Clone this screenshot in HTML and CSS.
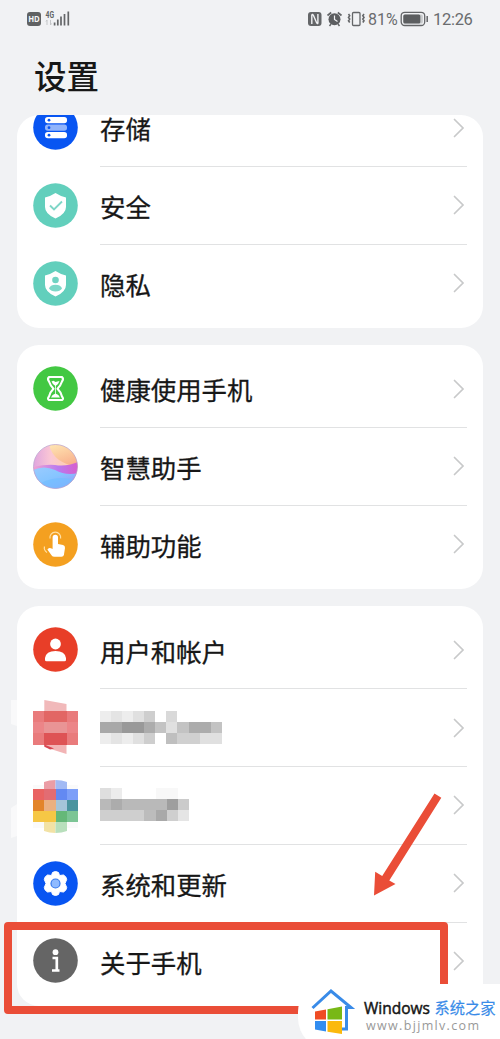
FILE: index.html
```html
<!DOCTYPE html>
<html lang="zh-CN">
<head>
<meta charset="utf-8">
<title>设置</title>
<link rel="stylesheet" href="styles.css">
</head>
<body>
<div class="screen">
  <header class="status">
    <svg class="status-left" viewBox="0 0 50 24">
      <rect x="1" y="6" width="14" height="14" rx="3" fill="#606263"/>
      <text class="hd" x="2.2" y="16.200" textLength="11.6" lengthAdjust="spacingAndGlyphs">HD</text>
      <text class="net" x="19.5" y="12" textLength="8.5" lengthAdjust="spacingAndGlyphs">4G</text>
      <path d="M21 14v5M20 15.500l1-1.500M24.500 14v5l1-1.500" stroke="#c4c6c8" fill="none"/>
      <path d="M28.600 17v3M31.800 14v6M35 11v9M38.500 8.500v11.500M42.300 6v14" transform="translate(0 -.4)" stroke="#646668" stroke-width="1.700"/>
    </svg>
    <div class="status-right">
      <svg class="status-icons" viewBox="0 0 60 24">
        <rect x="0" y="6" width="13.500" height="14" rx="3" fill="#646668"/>
        <path d="M3.800 18V9Q4.500 7.700 5.500 9.500L8.500 16.500Q9.700 18.300 9.900 17V8" fill="none" stroke="#f1f2f4" stroke-width="1.400"/>
        <circle cx="26.500" cy="13.300" r="6" fill="#5c5e60"/>
        <path d="M19.500 9.500l3.700-3M33.500 9.500l-3.700-3" stroke="#646668" stroke-width="1.700"/>
        <path d="M23 18l-1.500 2M30 18l1.500 2" stroke="#646668" stroke-width="1.500"/>
        <path d="M26.500 9.500v4l3 2" fill="none" stroke="#f1f2f4" stroke-width="1.200"/>
        <rect x="44.500" y="6.500" width="7.500" height="13" rx="1" fill="none" stroke="#646668" stroke-width="1.300"/>
        <path d="M40.500 8l1.200 1.700-1.200 1.700 1.200 1.700-1.200 1.700 1.200 1.700M56 8l-1.200 1.700 1.200 1.700-1.200 1.700 1.200 1.700-1.200 1.700" fill="none" stroke="#646668" stroke-width="1.600"/>
      </svg>
      <span class="percent">81%</span>
      <svg class="battery" viewBox="0 0 30 24">
        <rect x="1.200" y="6.300" width="23.500" height="13.200" rx="3.500" fill="none" stroke="#646668" stroke-width="1.300"/>
        <rect x="3.300" y="8.500" width="19.500" height="9" rx="1.500" fill="#c8cacc"/>
        <rect x="3.300" y="8.500" width="17" height="9" rx="1.500" fill="#5c5e60"/>
        <path d="M27.200 10v6" stroke="#646668" stroke-width="1.500"/>
      </svg>
      <span class="clock">12:26</span>
    </div>
  </header>
  <h1 class="title">设置</h1>
  <main class="cards">
    <section class="card card-scrolled">
      <div class="row">
        <svg class="icon" viewBox="0 0 45 45"><circle cx="22.500" cy="22.500" r="22.300" fill="#0855f2"/>
          <rect x="12" y="12" width="22" height="6.300" rx="2.800" fill="#fff"/><rect x="12" y="19.500" width="22" height="6.300" rx="2.800" fill="#91b4fb"/><rect x="12" y="27" width="22" height="6.300" rx="2.800" fill="#fff"/>
          <g fill="#0855f2"><circle cx="16" cy="15.200" r="1.400"/><circle cx="16" cy="22.700" r="1.400"/><circle cx="16" cy="30.200" r="1.400"/></g></svg>
        <div class="body"><span class="label">存储</span><svg class="chevron" viewBox="0 0 12 20"><path d="M1.500 1.500L10 10l-8.500 8.500"/></svg></div>
      </div>
      <div class="row">
        <svg class="icon" viewBox="0 0 45 45"><circle cx="22.500" cy="22.500" r="22.300" fill="#62cfbc"/>
          <path d="M22.500 10Q27 13 33 14.500V24Q33 31 22.500 35.500Q12 31 12 24V14.500Q18 13 22.500 10Z" fill="#fff"/>
          <path d="M17 22.500l4 4 8-8" fill="none" stroke="#7fd6c7" stroke-width="1.900"/></svg>
        <div class="body"><span class="label">安全</span><svg class="chevron" viewBox="0 0 12 20"><path d="M1.500 1.500L10 10l-8.500 8.500"/></svg></div>
      </div>
      <div class="row">
        <svg class="icon" viewBox="0 0 45 45"><circle cx="22.500" cy="22.500" r="22.300" fill="#62cfbc"/>
          <path d="M22.500 10Q27 13 33 14.500V24Q33 31 22.500 35.500Q12 31 12 24V14.500Q18 13 22.500 10Z" fill="#fff"/>
          <circle cx="22.500" cy="19" r="3.300" fill="#70d3c2"/><path d="M16 27.500Q17 23.700 22.500 23.700T29 27.500Q27 30.500 22.500 30.500T16 27.500Z" fill="#7dd8c8"/></svg>
        <div class="body"><span class="label">隐私</span><svg class="chevron" viewBox="0 0 12 20"><path d="M1.500 1.500L10 10l-8.500 8.500"/></svg></div>
      </div>
    </section>

    <section class="card">
      <div class="row">
        <svg class="icon" viewBox="0 0 45 45"><circle cx="22.500" cy="22.500" r="22.300" fill="#43c843"/>
          <path d="M16 11H29Q31 13 29 15.500Q27.500 20 24.500 22.700Q28 26 29 30.500Q31 33 29 34H16Q14 33 16 30.500Q17 26 20.500 22.700Q17.500 20 16 15.500Q14 13 16 11Z" fill="none" stroke="#fff" stroke-width="2.100" stroke-linejoin="round"/>
          <path d="M18.500 15.500l2-.7 2 1.200 4-1Q25.500 18.500 22.500 20Q19.500 18.500 18.500 15.500ZM18 31.500Q19 28.500 22.500 27.500Q26 28.500 27 31.500Z" fill="#fff"/><path d="M22.500 19v9" stroke="#fff" stroke-width=".8"/></svg>
        <div class="body"><span class="label">健康使用手机</span><svg class="chevron" viewBox="0 0 12 20"><path d="M1.500 1.500L10 10l-8.500 8.500"/></svg></div>
      </div>
      <div class="row">
        <svg class="icon" viewBox="0 0 45 45">
          <defs>
            <clipPath id="orb"><circle cx="22.500" cy="22.500" r="22"/></clipPath>
            <linearGradient id="sky"><stop offset="0" stop-color="#dfa5df"/><stop offset=".4" stop-color="#fbc8d4"/><stop offset="1" stop-color="#ffd49b"/></linearGradient>
            <linearGradient id="warm" x1="0" y1="0" x2=".4" y2="1"><stop offset="0" stop-color="#ffe8b4"/><stop offset="1" stop-color="#f8b08c"/></linearGradient>
            <linearGradient id="violet"><stop offset="0" stop-color="#f2a3d0"/><stop offset=".55" stop-color="#b97af0"/><stop offset="1" stop-color="#d85dcc"/></linearGradient>
            <linearGradient id="sea" x1="0" y1="0" x2=".8" y2="1"><stop offset="0" stop-color="#9acbff"/><stop offset=".5" stop-color="#86c5ff"/><stop offset="1" stop-color="#9a94fa"/></linearGradient>
          </defs>
          <g clip-path="url(#orb)"><rect width="45" height="45" fill="url(#sky)"/>
            <path d="M16 0H45V24Q32 20 26 16Q18 10 16 0Z" fill="url(#warm)"/>
            <path d="M0 23Q14 20 22 21Q33 23 45 18V36H0Z" fill="url(#violet)"/>
            <path d="M0 26Q11 21 22 26Q33 32 45 29V45H0Z" fill="url(#sea)"/>
            <path d="M8 39Q24 31 43 36L36 45H12Z" fill="#70bfff" opacity=".7"/></g>
          <circle cx="22.500" cy="22.500" r="22" fill="none" stroke="#b7a4cf" stroke-width=".7"/></svg>
        <div class="body"><span class="label">智慧助手</span><svg class="chevron" viewBox="0 0 12 20"><path d="M1.500 1.500L10 10l-8.500 8.500"/></svg></div>
      </div>
      <div class="row">
        <svg class="icon" viewBox="0 0 45 45"><circle cx="22.500" cy="22.500" r="22.300" fill="#f4a020"/>
          <path d="M19.600 15.500a2.700 2.700 0 0 1 5.400 0V22L30 23Q32.200 23.600 32 26L30.900 33Q30.500 34.800 28.500 34.800H21.500Q19.500 34.800 18.500 33.200L14.400 27.600Q15.500 25.300 18 26.300L19.600 27Z" fill="#fff"/>
          <path d="M17 16.500a5.400 5.400 0 1 1 10.600 0M11.500 24.500Q10.500 28 14 30.500" fill="none" stroke="#ffe0a4" stroke-width="1.200"/></svg>
        <div class="body"><span class="label">辅助功能</span><svg class="chevron" viewBox="0 0 12 20"><path d="M1.500 1.500L10 10l-8.500 8.500"/></svg></div>
      </div>
    </section>

    <section class="card">
      <div class="row">
        <svg class="icon" viewBox="0 0 45 45"><circle cx="22.500" cy="22.500" r="22.300" fill="#e83e28"/>
          <circle cx="22.500" cy="17" r="5.400" fill="#fff"/><path d="M12 33V31Q13 23.900 22.500 23.900T33 31V33Q33 34.300 31.500 34.300H13.500Q12 34.300 12 33Z" fill="#fff"/></svg>
        <div class="body"><span class="label">用户和帐户</span><svg class="chevron" viewBox="0 0 12 20"><path d="M1.500 1.500L10 10l-8.500 8.500"/></svg></div>
      </div>
      <div class="row">
        <svg class="mosaic" viewBox="0 0 45 56">
          <path d="M11.300 0L33.500 4v8H11.300Z" fill="#f1b9ba"/><path d="M11.300 44h22.200v10L11.300 47Z" fill="#f2b4b5"/>
          <path d="M11.300 44.500L21 48.500l-4 1-5.700-3Z" fill="#d84652"/>
          <g shape-rendering="crispEdges"><path d="M0 11h45v33.500H0Z" fill="#e97b7c"/><path d="M11 11h22.500v11H11Z" fill="#e26664"/><path d="M0 22h11v11H0ZM33.500 22H45v11H33.500Z" fill="#ec8588"/><path d="M11 22h22.500v11H11Z" fill="#e99495"/><path d="M11 33h22.500v11.500H11Z" fill="#de5355"/></g>
        </svg>
        <div class="body"><svg class="blurred" viewBox="0 0 123 56" shape-rendering="crispEdges">
          <path d="M0 11h11v33H0ZM22 11h11v33H22ZM83 33h11v11H83Z" fill="#ededed"/><path d="M11 11h11v33H11Z" fill="#e4e4e4"/><path d="M33 11h11v33H33Z" fill="#e0e0e0"/><path d="M44 11h11v33H44Z" fill="#cecece"/>
          <path d="M0 22h22v11H0Z" fill="#a8a8a8"/><path d="M22 22h22v11H22Z" fill="#999"/><path d="M44 22h11v11H44ZM89 22h22v11H89Z" fill="#acacac"/><path d="M55 22h11v11H55ZM78 22h11v11H78ZM111 22h11v11h-11Z" fill="#c3c3c3"/>
          <path d="M66 11h11v11H66Z" fill="#d9d9d9"/><path d="M66 22h11v11H66ZM100 33h22v11h-22Z" fill="#e0e0e0"/><path d="M66 33h11v11H66Z" fill="#bfbfbf"/><path d="M77 33h23v11H77Z" fill="#d0d0d0"/><path d="M77 22h1v11h-1Z" fill="#c3c3c3"/>
        </svg><svg class="chevron" viewBox="0 0 12 20"><path d="M1.500 1.500L10 10l-8.500 8.500"/></svg></div>
      </div>
      <div class="row">
        <svg class="mosaic" viewBox="0 -1 45 56">
          <path d="M11 10V3Q16 1 22.500 1V10Z" fill="#eb9da5"/><path d="M22.500 10V1Q29 1 34 3V10Z" fill="#a2baf4"/>
          <g shape-rendering="crispEdges"><path d="M0 10h11v11H0Z" fill="#e96362"/><path d="M11 10h11.500v11H11Z" fill="#e26c73"/><path d="M22.500 10H34v11H22.500Z" fill="#6389f2"/><path d="M34 10h11v11H34Z" fill="#7d9ff8"/>
          <path d="M0 21h11v11H0Z" fill="#e38429"/><path d="M11 21h11.500v11H11Z" fill="#ebb080"/><path d="M22.500 21H34v11H22.500Z" fill="#a5c5d9"/><path d="M34 21h11v11H34Z" fill="#4a949f"/>
          <path d="M0 32h22.500v11H0Z" fill="#f6c745"/><path d="M22.500 32H34v11H22.500Z" fill="#65b878"/><path d="M34 32h11v11H34Z" fill="#7cc595"/></g>
          <path d="M11 43h11.500v11Q16 54 11 52Z" fill="#f2e2a5"/><path d="M22.500 43H34v9Q29 54 22.500 54Z" fill="#b8dfbc"/>
          <path d="M0 6h11v4H0ZM34 6h11v4H34ZM0 43h11v6H0ZM34 43h11v6H34Z" fill="#fafafa"/>
        </svg>
        <div class="body"><svg class="blurred" viewBox="0 -1 123 56" shape-rendering="crispEdges">
          <path d="M0 10h11v11H0Z" fill="#dedede"/><path d="M11 10h11v11H11Z" fill="#ececec"/><path d="M56 10h22v11H56Z" fill="#f8f8f8"/>
          <path d="M0 21h89v11H0Z" fill="#b9b9b9"/><path d="M11 21h11v11H11Z" fill="#acacac"/><path d="M67 21h11v11H67Z" fill="#9e9e9e"/><path d="M78 21h11v11H78Z" fill="#cbcbcb"/>
          <path d="M0 32h89v11H0Z" fill="#cfcfcf"/><path d="M44 32h12v11H44Z" fill="#bcbcbc"/><path d="M56 32h11v11H56Z" fill="#a9a9a9"/><path d="M78 32h11v11H78Z" fill="#e5e5e5"/>
        </svg><svg class="chevron" viewBox="0 0 12 20"><path d="M1.500 1.500L10 10l-8.500 8.500"/></svg></div>
      </div>
      <div class="row">
        <svg class="icon" viewBox="0 0 45 45"><circle cx="22.500" cy="22.500" r="22.300" fill="#0855f2"/>
          <path d="M19.500 11.500Q22.500 9.500 25.500 11.500L26.500 14.500L30.500 14Q33.500 15.500 33.700 18.500L32 22.500L33.700 26.500Q33.500 29.500 30.500 31L26.500 30.500L25.500 33.500Q22.500 35.500 19.500 33.500L18.500 30.500L14.500 31Q11.500 29.500 11.300 26.500L13 22.500L11.300 18.500Q11.500 15.500 14.500 14L18.500 14.500Z" fill="#fff" stroke="#fff" stroke-linejoin="round"/>
          <circle cx="22.500" cy="22.500" r="4.500" fill="#8fbaff" stroke="#3478ed" stroke-width="1.200"/></svg>
        <div class="body"><span class="label">系统和更新</span><svg class="chevron" viewBox="0 0 12 20"><path d="M1.500 1.500L10 10l-8.500 8.500"/></svg></div>
      </div>
      <div class="row">
        <svg class="icon" viewBox="0 0 45 45"><circle cx="22.500" cy="22.500" r="22.300" fill="#656565"/>
          <circle cx="22.500" cy="14.200" r="2.900" fill="#fff"/><path d="M19.500 20h4.300v12.500M19 32.500h7.500" fill="none" stroke="#fff" stroke-width="2.700"/></svg>
        <div class="body"><span class="label">关于手机</span><svg class="chevron" viewBox="0 0 12 20"><path d="M1.500 1.500L10 10l-8.500 8.500"/></svg></div>
      </div>
    </section>
  </main>

  <svg class="smudges" viewBox="0 0 6 140"><path d="M0 0L6-2V26L0 24ZM0 108L6 104V136L0 138Z" fill="#f9f9fa"/></svg>
  <div class="highlight"></div>
  <svg class="arrow" viewBox="0 0 75 106"><path d="M64.500 3.500L71.300 7.700L19.300 90.500L25.500 94L4 105.500L5.200 81.700L12.200 86Z" fill="#ea4d37"/></svg>
  <footer class="watermark">
    <svg class="logo" viewBox="0 0 46 46">
      <path d="M3.500 21L22 4L42 20.500H37.500V42H29" fill="none" stroke="#398be8" stroke-width="3"/>
      <path d="M6 24.500L17 22.500V32.500H6Z" fill="#ef4c24"/><path d="M18.500 22.200L33 19.500V32.500H18.500Z" fill="#78b816"/><path d="M6 34H17V44.500L6 42.500Z" fill="#328df0"/><path d="M18.500 34H33V47L18.500 44.700Z" fill="#fbb90d"/>
    </svg>
    <svg class="wordmark" viewBox="0 0 137 46">
      <text class="brand" x="2" y="27" textLength="66" lengthAdjust="spacingAndGlyphs">Windows</text>
      <text class="brand-cn" x="72.500" y="27" textLength="61" lengthAdjust="spacingAndGlyphs">系统之家</text>
      <text class="url" x="4" y="42.500" textLength="113">www.bjjmlv.com</text>
    </svg>
  </footer>
</div>
</body>
</html>
```

FILE: styles.css
```css
* { box-sizing: border-box; }
body {
  margin: 0;
  background: #f1f2f4;
  color: #171717;
  font-family: "Noto Sans CJK SC", sans-serif;
}
svg { display: block; flex: none; }
.screen {
  position: relative;
  width: 500px;
  height: 1039px;
  overflow: hidden;
}
.status {
  display: flex;
  justify-content: space-between;
  height: 38px;
  padding: 6px 26px 0 26px;
}
.status-left { width: 50px; height: 24px; }
.status-right {
  display: flex;
  align-items: center;
  height: 24px;
  color: #6a6c6e;
  font: 16.5px/24px Roboto, sans-serif;
}
.status-icons { width: 60px; height: 24px; }
.percent { width: 32px; padding-top: 3px; font-size: 16px; }
.battery { width: 30px; height: 24px; }
.clock { width: 41px; margin-left: 3px; padding-top: 3px; letter-spacing: -.3px; white-space: nowrap; }
.hd { font: bold 9px "Open Sans", sans-serif; fill: #f5f6f7; }
.net { font: bold 8.500px Roboto, sans-serif; fill: #606264; }
.title {
  height: 77px;
  margin: 0;
  padding: 13px 0 0 34px;
  font-size: 32.5px;
  line-height: 48px;
  font-weight: 500;
}
.cards {
  display: flex;
  flex-direction: column;
  gap: 16.5px;
  padding: 0 17px;
}
.card {
  display: flex;
  flex-direction: column;
  justify-content: flex-end;
  padding: 5.8px 16px 5.4px;
  border-radius: 22px;
  background: #fff;
  overflow: hidden;
}
.card-scrolled { height: 213px; }
.row {
  display: flex;
  align-items: center;
  flex: none;
  height: 77.8px;
}
.icon { width: 45px; height: 45px; margin-bottom: 1px; }
.mosaic { width: 45px; height: 56px; }
.blurred { width: 123px; height: 56px; }
.body {
  display: flex;
  align-items: center;
  justify-content: space-between;
  flex: 1;
  height: 100%;
  margin-left: 22px;
  padding-right: 2px;
  border-bottom: 1px solid #e1e2e3;
}
.row:last-child .body { border-bottom-color: transparent; }
.label {
  padding-top: 1.5px;
  font-size: 25.4px;
  line-height: 26px;
  -webkit-text-stroke: .3px #171717;
}
.chevron { width: 12px; height: 20px; }
.chevron path { fill: none; stroke: #c8c9ca; stroke-width: 1.700; stroke-linecap: round; }
.smudges {
  position: absolute;
  left: 11px;
  top: 700px;
  width: 6px;
  height: 140px;
}
.highlight {
  position: absolute;
  left: 4px;
  top: 922px;
  width: 444px;
  height: 92px;
  border: 8px solid #ea4d37;
  border-radius: 4px;
}
.arrow {
  position: absolute;
  left: 370px;
  top: 790px;
  width: 75px;
  height: 106px;
}
.watermark {
  position: absolute;
  left: 298px;
  top: 984px;
  display: flex;
  width: 202px;
  height: 66px;
  padding: 3px 0 0 11px;
  border-radius: 28px 0 0 32px;
  background: #fff;
}
.logo { width: 46px; height: 46px; overflow: visible; }
.wordmark { width: 137px; height: 46px; margin-left: 7px; }
.brand { font: 17px "Open Sans", sans-serif; fill: #151515; stroke: #151515; stroke-width: .5px; }
.brand-cn { font: 15.5px "Noto Sans CJK SC", sans-serif; fill: #398be8; stroke: #398be8; stroke-width: .2px; }
.url { font: 12.5px "Open Sans", sans-serif; fill: #999; }
```
